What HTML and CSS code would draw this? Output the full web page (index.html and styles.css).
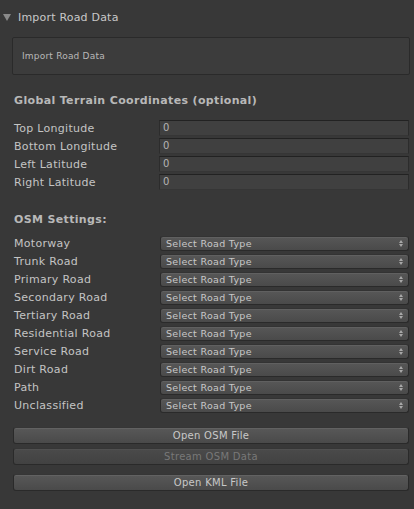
FILE: index.html
```html
<!DOCTYPE html>
<html>
<head>
<meta charset="utf-8">
<link rel="stylesheet" href="styles.css">
</head>
<body>
<div class="panel">
  <div class="foldout">
    <span class="tri"></span>
    <span class="foldout-title">Import Road Data</span>
  </div>
  <div class="helpbox">Import Road Data</div>

  <div class="heading heading-coords">Global Terrain Coordinates (optional)</div>
  <div class="rows rows-coords">
    <div class="row"><span class="label">Top Longitude</span><div class="input">0</div></div>
    <div class="row"><span class="label">Bottom Longitude</span><div class="input">0</div></div>
    <div class="row"><span class="label">Left Latitude</span><div class="input">0</div></div>
    <div class="row"><span class="label">Right Latitude</span><div class="input">0</div></div>
  </div>

  <div class="heading heading-osm">OSM Settings:</div>
  <div class="rows rows-osm">
    <div class="row"><span class="label">Motorway</span><div class="select"><span>Select Road Type</span><i class="arrows"></i></div></div>
    <div class="row"><span class="label">Trunk Road</span><div class="select"><span>Select Road Type</span><i class="arrows"></i></div></div>
    <div class="row"><span class="label">Primary Road</span><div class="select"><span>Select Road Type</span><i class="arrows"></i></div></div>
    <div class="row"><span class="label">Secondary Road</span><div class="select"><span>Select Road Type</span><i class="arrows"></i></div></div>
    <div class="row"><span class="label">Tertiary Road</span><div class="select"><span>Select Road Type</span><i class="arrows"></i></div></div>
    <div class="row"><span class="label">Residential Road</span><div class="select"><span>Select Road Type</span><i class="arrows"></i></div></div>
    <div class="row"><span class="label">Service Road</span><div class="select"><span>Select Road Type</span><i class="arrows"></i></div></div>
    <div class="row"><span class="label">Dirt Road</span><div class="select"><span>Select Road Type</span><i class="arrows"></i></div></div>
    <div class="row"><span class="label">Path</span><div class="select"><span>Select Road Type</span><i class="arrows"></i></div></div>
    <div class="row"><span class="label">Unclassified</span><div class="select"><span>Select Road Type</span><i class="arrows"></i></div></div>
  </div>

  <div class="buttons">
    <div class="btn">Open OSM File</div>
    <div class="btn disabled">Stream OSM Data</div>
    <div class="btn btn-gap">Open KML File</div>
  </div>
</div>
</body>
</html>
```
FILE: styles.css
```css
html, body {
  margin: 0;
  padding: 0;
  background: #383838;
}
body {
  width: 414px;
  height: 509px;
  overflow: hidden;
  font-family: "DejaVu Sans", sans-serif;
  color: #c4c4c4;
}
.panel {
  padding-top: 9px;
}
.foldout {
  display: flex;
  align-items: center;
  height: 16px;
  padding-left: 3px;
}
.tri {
  width: 0;
  height: 0;
  border-left: 4px solid transparent;
  border-right: 4px solid transparent;
  border-top: 7px solid #8a8a8a;
  margin-right: 7px;
}
.foldout-title {
  font-size: 11px;
  color: #c8c8c8;
  letter-spacing: 0.2px;
}
.helpbox {
  margin: 12px 4px 0 12px;
  height: 38px;
  box-sizing: border-box;
  border: 1px solid #2a2a2a;
  border-radius: 2px;
  background: #3c3c3c;
  font-size: 9px;
  color: #b8b8b8;
  display: flex;
  align-items: center;
  padding-left: 9px;
  letter-spacing: 0.2px;
}
.heading {
  font-weight: bold;
  font-size: 11px;
  color: #b8b8b8;
  padding-left: 14px;
  height: 14px;
  line-height: 14px;
  letter-spacing: 0.35px;
}
.heading-coords {
  margin-top: 19px;
}
.heading-osm {
  margin-top: 23px;
}
.rows {
  display: flex;
  flex-direction: column;
  gap: 2px;
}
.rows-coords {
  margin-top: 12px;
}
.rows-osm {
  margin-top: 8px;
}
.row {
  display: flex;
  align-items: center;
  height: 16px;
  padding-left: 14px;
  padding-right: 5px;
}
.label {
  width: 145px;
  flex: none;
  font-size: 11px;
  color: #c4c4c4;
  letter-spacing: 0.3px;
}
.input {
  flex: 1;
  height: 16px;
  box-sizing: border-box;
  background: #404040;
  border: 1px solid #2c2c2c;
  border-top-color: #222;
  border-bottom-color: #363636;
  font-size: 10px;
  color: #b4b4b4;
  padding-left: 3px;
  line-height: 14px;
}
.select {
  flex: 1;
  margin-left: 1px;
  height: 15px;
  box-sizing: border-box;
  border-radius: 3px;
  background: linear-gradient(#575757, #4a4a4a);
  border: 1px solid #2a2a2a;
  border-top-color: #333;
  box-shadow: inset 0 1px 0 #606060;
  font-size: 9.5px;
  color: #c8c8c8;
  display: flex;
  align-items: center;
  justify-content: space-between;
  padding: 0 5px;
  letter-spacing: 0.3px;
}
.arrows {
  display: block;
  width: 4px;
  height: 7px;
  position: relative;
}
.arrows::before, .arrows::after {
  content: "";
  position: absolute;
  left: 0;
  border-left: 2px solid transparent;
  border-right: 2px solid transparent;
}
.arrows::before {
  top: 0;
  border-bottom: 3px solid #a8a8a8;
}
.arrows::after {
  bottom: 0;
  border-top: 3px solid #a8a8a8;
}
.buttons {
  margin-top: 14px;
  padding: 0 5px 0 13px;
  display: flex;
  flex-direction: column;
  gap: 4px;
}
.btn {
  height: 17px;
  box-sizing: border-box;
  border-radius: 3px;
  background: linear-gradient(#585858, #4a4a4a);
  border: 1px solid #2a2a2a;
  border-top-color: #363636;
  box-shadow: inset 0 1px 0 #626262;
  font-size: 10px;
  color: #c8c8c8;
  text-align: center;
  line-height: 15px;
  letter-spacing: 0.3px;
}
.btn.disabled {
  background: linear-gradient(#4a4a4a, #424242);
  box-shadow: inset 0 1px 0 #505050;
  color: #787878;
}
.btn-gap {
  margin-top: 5px;
}
```
